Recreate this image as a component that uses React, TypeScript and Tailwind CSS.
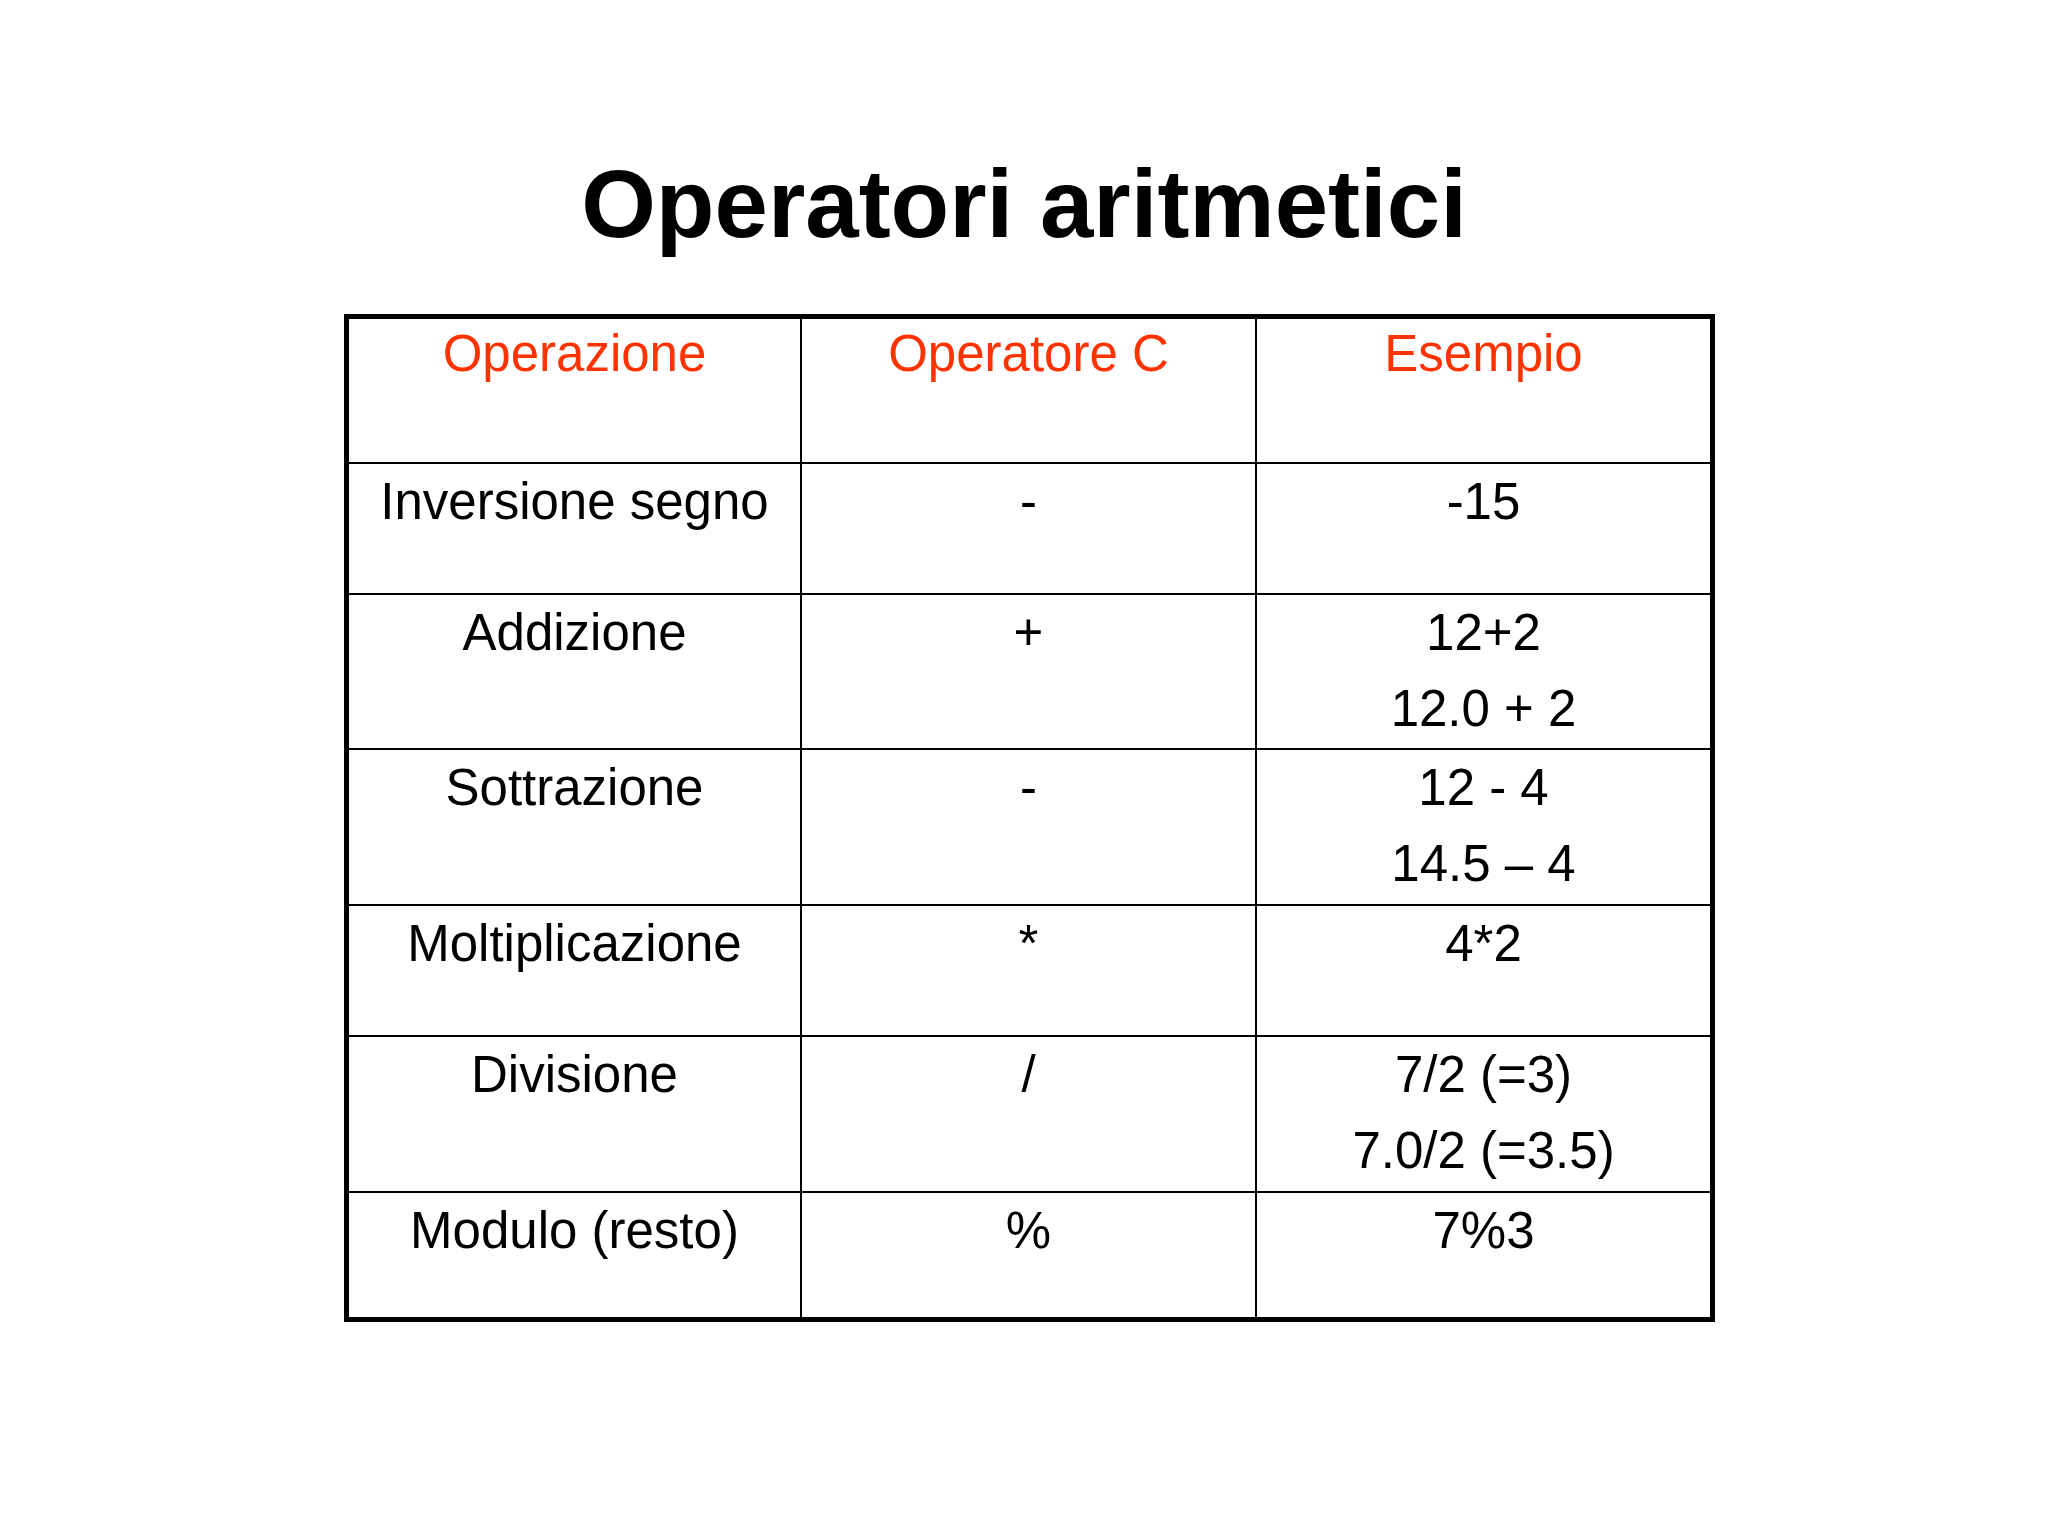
import React from "react";

/* -------------------------------------------------------------------------- */
/*                                 Table data                                 */
/* -------------------------------------------------------------------------- */
interface RowInterface {
  operation: string;
  operator: string;
  examples: string[];
  height: string;
}

const rows: RowInterface[] = [
  { operation: "Inversione segno", operator: "-", examples: ["-15"], height: "h-[131px]" },
  { operation: "Addizione", operator: "+", examples: ["12+2", "12.0 + 2"], height: "h-[155px]" },
  { operation: "Sottrazione", operator: "-", examples: ["12 - 4", "14.5 – 4"], height: "h-[156px]" },
  { operation: "Moltiplicazione", operator: "*", examples: ["4*2"], height: "h-[131px]" },
  { operation: "Divisione", operator: "/", examples: ["7/2 (=3)", "7.0/2 (=3.5)"], height: "h-[156px]" },
  { operation: "Modulo (resto)", operator: "%", examples: ["7%3"], height: "h-[126px]" },
];

const cell = "text-center text-[51px] leading-[76px] text-black";

const App = () => {
  return (
    <div className="w-[2048px] h-[1536px] bg-white font-['Liberation_Sans',Arial,sans-serif] overflow-hidden">
      {/* title */}
      <h1 className="pt-[149px] text-center text-[96px] leading-[110px] font-bold text-black">
        Operatori aritmetici
      </h1>

      {/* table starts */}
      <div className="mt-[55px] ml-[344px] w-[1371px] border-[5px] border-black">
        {/* header */}
        <div className="flex h-[143px]">
          <div className="w-[451px] text-center text-[51px] leading-[70px] text-[#ff3300]">Operazione</div>
          <div className="w-[455px] border-l-2 border-black text-center text-[51px] leading-[70px] text-[#ff3300]">
            Operatore C
          </div>
          <div className="flex-1 border-l-2 border-black text-center text-[51px] leading-[70px] text-[#ff3300]">
            Esempio
          </div>
        </div>

        {rows.map((row) => (
          <div key={row.operation} className={`flex border-t-2 border-black ${row.height}`}>
            <div className={`w-[451px] ${cell}`}>{row.operation}</div>
            <div className={`w-[455px] border-l-2 border-black ${cell}`}>{row.operator}</div>
            <div className={`flex-1 border-l-2 border-black ${cell}`}>
              {row.examples.map((ex) => (
                <div key={ex}>{ex}</div>
              ))}
            </div>
          </div>
        ))}
      </div>
      {/* table ends */}
    </div>
  );
};

export default App;
